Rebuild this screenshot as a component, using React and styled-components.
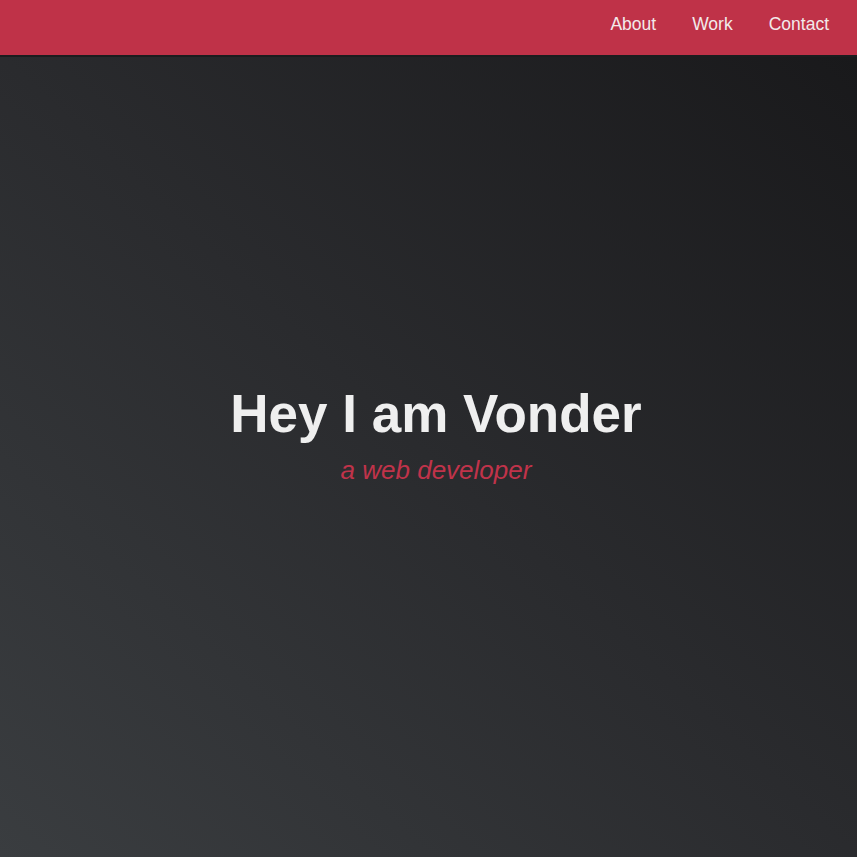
import React from "react";
import styled, { createGlobalStyle } from "styled-components";

const GlobalStyle = createGlobalStyle`
  html, body {
    margin: 0;
    padding: 0;
  }
  body {
    font-family: "Liberation Sans", Arial, sans-serif;
    background: #202124;
  }
`;

const Page = styled.div`
  display: flex;
  flex-direction: column;
  min-height: 100vh;
`;

const Header = styled.header`
  display: flex;
  align-items: center;
  justify-content: flex-end;
  height: 55px;
  padding: 0 28px 0 0;
  background: #bf3248;
  border-bottom: 2px solid #1c1c1e;
`;

const NavList = styled.nav`
  display: flex;
  align-items: center;
  gap: 36px;
  margin-top: -6px;
`;

const NavLink = styled.a`
  color: #f2eaeb;
  font-size: 17.5px;
  text-decoration: none;
  cursor: pointer;
`;

const Hero = styled.main`
  flex: 1;
  display: flex;
  flex-direction: column;
  align-items: center;
  justify-content: center;
  padding: 0 0 44px 15px;
  background: linear-gradient(to top right, #3a3d40 0%, #2a2b2e 50%, #19191b 100%);
`;

const Title = styled.h1`
  margin: 0;
  color: #efefef;
  font-size: 53px;
  font-weight: bold;
  line-height: 60px;
`;

const Subtitle = styled.p`
  margin: 11px 0 0;
  color: #c0334a;
  font-size: 26px;
  font-style: italic;
`;

export default function App() {
  return (
    <>
      <GlobalStyle />
      <Page>
        <Header>
          <NavList>
            <NavLink>About</NavLink>
            <NavLink>Work</NavLink>
            <NavLink>Contact</NavLink>
          </NavList>
        </Header>
        <Hero>
          <Title>Hey I am Vonder</Title>
          <Subtitle>a web developer</Subtitle>
        </Hero>
      </Page>
    </>
  );
}
